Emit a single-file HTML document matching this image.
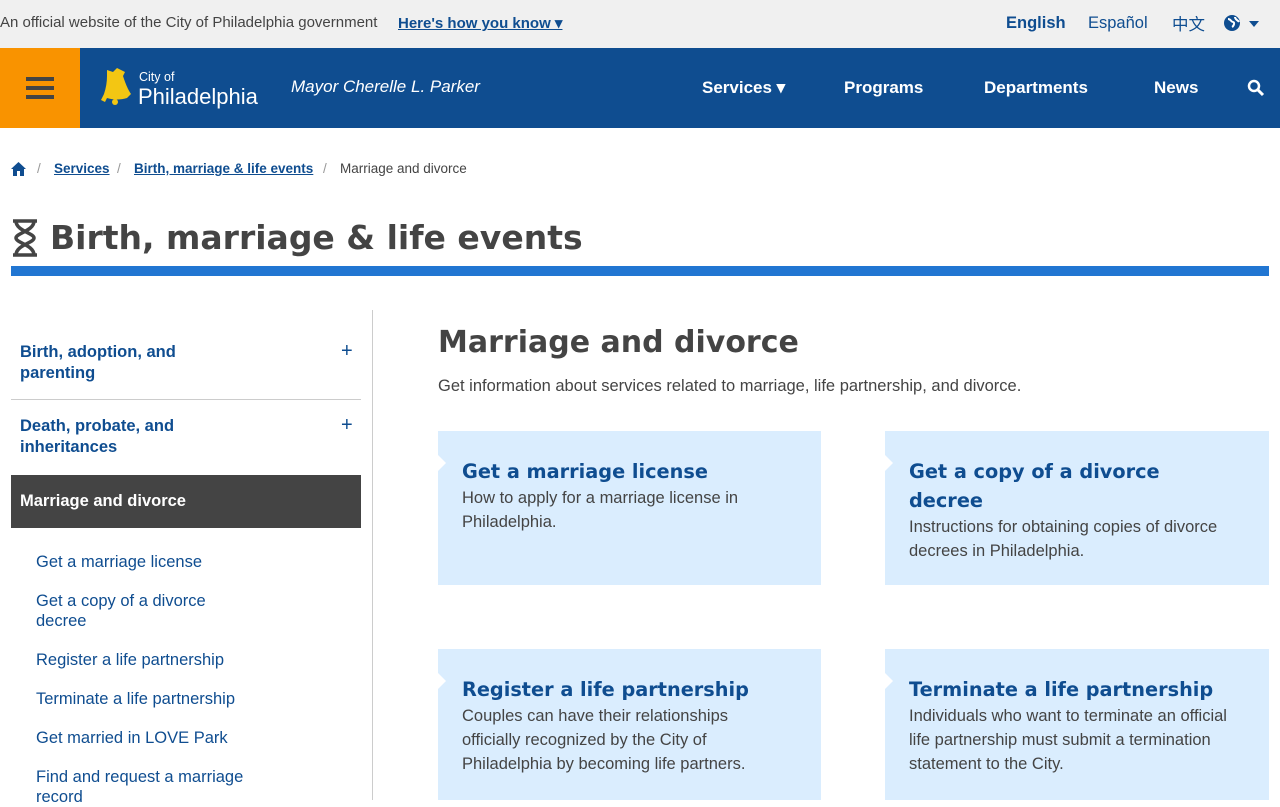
<!DOCTYPE html>
<html><head><meta charset="utf-8"><style>
*{box-sizing:border-box;margin:0;padding:0}
body{width:1280px;height:800px;overflow:hidden;font-family:"Liberation Sans",sans-serif;background:#fff;color:#444;position:relative}
a{color:#0f4d90}
.top{height:48px;background:#f0f0f0;position:relative;font-size:15px}
.abs{position:absolute;white-space:nowrap}
.hdr{position:absolute;top:48px;left:0;width:1280px;height:80px;background:#0f4d90}
.menu{position:absolute;left:0;top:0;width:80px;height:80px;background:#f99300}
.menu i{position:absolute;left:26px;width:28px;height:4px;background:#444}
.nav{color:#fff;font-weight:bold;font-size:17px;top:30px}
.side{font-size:16.5px;color:#0f4d90;font-weight:bold;line-height:21px}
.sub{font-size:16.5px;color:#0f4d90;line-height:20px}
.card{position:absolute;background:#daedfe;}
.card:before{content:"";position:absolute;left:0;top:24px;border-left:8px solid #fff;border-top:8px solid transparent;border-bottom:8px solid transparent}
.card h3{font-family:"DejaVu Sans",sans-serif;font-weight:bold;font-size:19.3px;color:#0f4d90;line-height:29px}
.card p{font-size:16.5px;line-height:24px;color:#444}
</style></head><body>
<div class="top">
<div class="abs" style="left:0;top:14px;color:#444">An official website of the City of Philadelphia government</div>
<div class="abs" style="left:398px;top:14px;color:#0f4d90;font-weight:bold;text-decoration:underline">Here's how you know ▾</div>
<div class="abs" style="left:1006px;top:14px;color:#0f4d90;font-weight:bold;font-size:16.5px">English</div>
<div class="abs" style="left:1088px;top:14px;color:#0f4d90;font-size:16.5px">Español</div>
<div class="abs" style="left:1172px;top:11px;color:#0f4d90;font-size:16.5px;font-family:'Noto Sans CJK SC',sans-serif">中文</div>
<svg class="abs" style="left:1224px;top:15px" width="36" height="17" viewBox="0 0 36 17"><circle cx="8" cy="8" r="8" fill="#0f4d90"/><path d="M4 4c3 0 3 3 5 3s1 4-1 5M11 2c0 3 3 3 4 5" stroke="#fff" stroke-width="2" fill="none"/><path d="M29 6h10l-5 6z" fill="#0f4d90" transform="translate(-4 0)"/></svg>
</div>
<div class="hdr">
<div class="menu"><i style="top:29px"></i><i style="top:38px"></i><i style="top:47px"></i></div>
<svg class="abs" style="left:99px;top:18px" width="36" height="42" viewBox="0 0 36 42"><path d="M8 4l6 2 4-4 8 4-2 4c2 6 4 12 8 18l-4 4c-6 2-14 2-20 0l-2 4-4-2 3-6c2-6 3-12 3-18z" fill="#f3c613"/><circle cx="16" cy="36" r="3" fill="#f3c613"/></svg>
<div class="abs" style="left:139px;top:22px;color:#fff;font-size:12.5px">City of</div>
<div class="abs" style="left:138px;top:36px;color:#fff;font-size:22px">Philadelphia</div>
<div class="abs" style="left:291px;top:29px;color:#fff;font-style:italic;font-size:17px">Mayor Cherelle L. Parker</div>
<div class="abs nav" style="left:702px">Services ▾</div>
<div class="abs nav" style="left:844px">Programs</div>
<div class="abs nav" style="left:984px">Departments</div>
<div class="abs nav" style="left:1154px">News</div>
<svg class="abs" style="left:1247px;top:31px" width="18" height="18" viewBox="0 0 18 18"><circle cx="7" cy="7" r="5" stroke="#fff" stroke-width="2.5" fill="none"/><path d="M11 11l5 5" stroke="#fff" stroke-width="3"/></svg>
</div>
<svg class="abs" style="left:11px;top:162px" width="15" height="14" viewBox="0 0 15 14"><path d="M7.5 0L0 7h2v7h4V9h3v5h4V7h2z" fill="#0f4d90"/></svg>
<div class="abs" style="top:161px;left:37px;font-size:13.5px;color:#999">/</div>
<div class="abs" style="top:161px;left:54px;font-size:13.5px;font-weight:bold;color:#0f4d90;text-decoration:underline">Services</div>
<div class="abs" style="top:161px;left:117px;font-size:13.5px;color:#999">/</div>
<div class="abs" style="top:161px;left:134px;font-size:13.5px;font-weight:bold;color:#0f4d90;text-decoration:underline">Birth, marriage &amp; life events</div>
<div class="abs" style="top:161px;left:323px;font-size:13.5px;color:#999">/</div>
<div class="abs" style="top:161px;left:340px;font-size:13.5px;color:#444">Marriage and divorce</div>
<svg class="abs" style="left:11px;top:219px" width="28" height="38" viewBox="0 0 28 38"><path d="M2 2h24M2 36h24M5 2c0 10 18 12 18 17S5 26 5 36M23 2c0 10-18 12-18 17s18 7 18 17" stroke="#444" stroke-width="3.5" fill="none"/></svg>
<div class="abs" style="left:50px;top:218px;font-family:'DejaVu Sans',sans-serif;font-size:33px;color:#444;font-weight:600">Birth, marriage &amp; life events</div>
<div class="abs" style="left:11px;top:266px;width:1258px;height:10px;background:#2176d2"></div>
<div class="abs" style="left:372px;top:310px;width:1px;height:490px;background:#ccc"></div>
<div class="abs side" style="left:20px;top:342px">Birth, adoption, and<br>parenting</div>
<div class="abs" style="left:341px;top:340px;color:#0f4d90;font-size:20px">+</div>
<div class="abs" style="left:11px;top:399px;width:350px;height:1px;background:#ccc"></div>
<div class="abs side" style="left:20px;top:416px">Death, probate, and<br>inheritances</div>
<div class="abs" style="left:341px;top:414px;color:#0f4d90;font-size:20px">+</div>
<div class="abs" style="left:11px;top:475px;width:350px;height:53px;background:#444"></div>
<div class="abs side" style="left:20px;top:491px;color:#fff">Marriage and divorce</div>
<div class="abs sub" style="left:36px;top:552px">Get a marriage license</div>
<div class="abs sub" style="left:36px;top:591px">Get a copy of a divorce<br>decree</div>
<div class="abs sub" style="left:36px;top:650px">Register a life partnership</div>
<div class="abs sub" style="left:36px;top:689px">Terminate a life partnership</div>
<div class="abs sub" style="left:36px;top:728px">Get married in LOVE Park</div>
<div class="abs sub" style="left:36px;top:767px">Find and request a marriage<br>record</div>
<div class="abs" style="left:438px;top:325px;font-family:'DejaVu Sans',sans-serif;font-size:30px;color:#444;font-weight:600">Marriage and divorce</div>
<div class="abs" style="left:438px;top:377px;font-size:16.5px;color:#444">Get information about services related to marriage, life partnership, and divorce.</div>
<div class="card" style="left:438px;top:431px;width:383px;height:154px;padding:26px 60px 26px 24px"><h3>Get a marriage license</h3><p>How to apply for a marriage license in Philadelphia.</p></div>
<div class="card" style="left:885px;top:431px;width:384px;height:154px;padding:26px 70px 26px 24px"><h3>Get a copy of a divorce decree</h3><p style="margin-right:-46px">Instructions for obtaining copies of divorce decrees in Philadelphia.</p></div>
<div class="card" style="left:438px;top:649px;width:383px;height:151px;padding:26px 60px 26px 24px"><h3>Register a life partnership</h3><p>Couples can have their relationships officially recognized by the City of Philadelphia by becoming life partners.</p></div>
<div class="card" style="left:885px;top:649px;width:384px;height:151px;padding:26px 24px"><h3>Terminate a life partnership</h3><p>Individuals who want to terminate an official life partnership must submit a termination statement to the City.</p></div>
</body></html>
